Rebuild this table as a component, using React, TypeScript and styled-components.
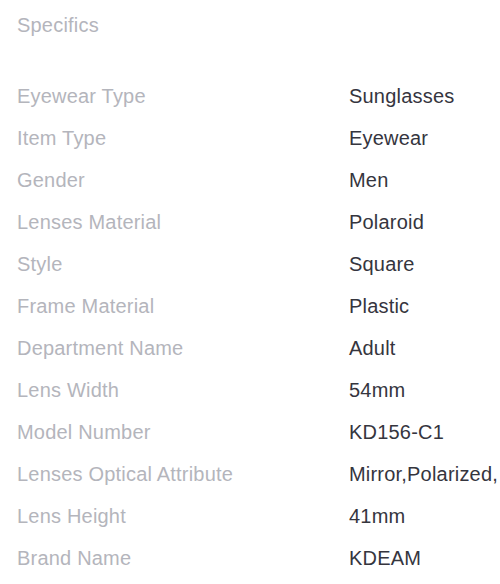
import React from "react";
import styled, { createGlobalStyle } from "styled-components";

const Global = createGlobalStyle`
  html, body { margin: 0; padding: 0; background: #ffffff; }
  body { font-family: "Liberation Sans", Arial, Helvetica, sans-serif; }
`;

const Page = styled.div`
  padding: 4px 0 0 17px;
  width: 500px;
  box-sizing: border-box;
  overflow: hidden;
`;

const Heading = styled.div`
  font-size: 20px;
  line-height: 42px;
  letter-spacing: 0.2px;
  color: #b4b5bc;
  margin-bottom: 29px;
`;

const Table = styled.div`
  display: grid;
  grid-template-columns: 332px auto;
`;

const Cell = styled.div<{ $value?: boolean }>`
  font-size: 20px;
  line-height: 42px;
  letter-spacing: 0.2px;
  white-space: nowrap;
  color: ${(p) => (p.$value ? "#35353e" : "#b4b5bc")};
`;

const rows: [string, string][] = [
  ["Eyewear Type", "Sunglasses"],
  ["Item Type", "Eyewear"],
  ["Gender", "Men"],
  ["Lenses Material", "Polaroid"],
  ["Style", "Square"],
  ["Frame Material", "Plastic"],
  ["Department Name", "Adult"],
  ["Lens Width", "54mm"],
  ["Model Number", "KD156-C1"],
  ["Lenses Optical Attribute", "Mirror,Polarized,"],
  ["Lens Height", "41mm"],
  ["Brand Name", "KDEAM"],
];

export default function App() {
  return (
    <>
      <Global />
      <Page>
        <Heading>Specifics</Heading>
        <Table>
          {rows.map(([k, v]) => (
            <React.Fragment key={k}>
              <Cell>{k}</Cell>
              <Cell $value>{v}</Cell>
            </React.Fragment>
          ))}
        </Table>
      </Page>
    </>
  );
}
